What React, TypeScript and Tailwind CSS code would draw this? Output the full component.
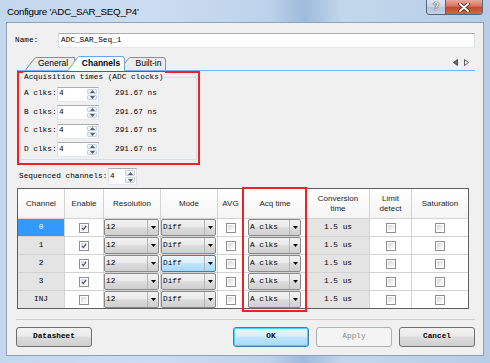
import React from 'react';

const mono = "font-['Liberation_Mono',monospace] text-[7.75px] text-black";
const btnBg = 'bg-[linear-gradient(#f2f2f2,#ebebeb_45%,#dddddd_50%,#cfcfcf)]';

const UpTri = () => (
  <svg width="5" height="3" viewBox="0 0 5 3"><path d="M0 3 L2.5 0 L5 3 Z" fill="#4c607f" /></svg>
);
const DownTri = ({ color = '#4c607f' }: { color?: string }) => (
  <svg width="5" height="3" viewBox="0 0 5 3"><path d="M0 0 L5 0 L2.5 3 Z" fill={color} /></svg>
);

const SpinBox = ({ value, className }: { value: string; className: string }) => (
  <div className={`flex bg-white border border-[#abadb3] border-x-[#dbdfe6] border-b-[#e3e9ef] ${className}`}>
    <span className={`flex-1 pl-px flex items-center leading-none ${mono}`}>{value}</span>
    <div className="w-[12px] flex flex-col gap-px p-px">
      <div className="flex-1 rounded-[1px] border border-[#c9d0da] bg-[linear-gradient(#f7f9fb,#e4e9ef)] flex items-center justify-center">
        <UpTri />
      </div>
      <div className="flex-1 rounded-[1px] border border-[#c9d0da] bg-[linear-gradient(#f7f9fb,#e4e9ef)] flex items-center justify-center">
        <DownTri />
      </div>
    </div>
  </div>
);

const CheckBox = ({ checked }: { checked?: boolean }) => (
  <div className="w-[10px] h-[10px] border border-[#8e8f8f] bg-white p-px">
    <div className="w-full h-full bg-[linear-gradient(135deg,#d6d6d6,#f4f4f4_70%,#fdfdfd)] flex items-center justify-center">
      {checked && (
        <svg width="8" height="8" viewBox="0 0 8 8">
          <path d="M1.3 4 L3.2 6.2 L6.8 1.2" fill="none" stroke="#2f4e9c" strokeWidth="1.5" />
        </svg>
      )}
    </div>
  </div>
);

const Combo = ({ text, hover }: { text: string; hover?: boolean }) => (
  <div
    className={`w-full h-full flex rounded-[2px] border ${
      hover
        ? 'border-[#3c7fb1] bg-[linear-gradient(#eaf6fd,#d9f0fc_45%,#bee6fd_50%,#a7d9f5)]'
        : `border-[#8a8a8a] ${btnBg}`
    }`}
  >
    <span className={`flex-1 pl-px flex items-center leading-none ${mono}`}>{text}</span>
    <div className="w-[11px] border-l border-[#b5b5b5] flex items-center justify-center">
      <DownTri color="#000" />
    </div>
  </div>
);

const Button = ({ label, variant }: { label: string; variant?: 'default' | 'disabled' }) => (
  <div
    className={`w-[76px] h-[20px] rounded-[3px] border flex items-center justify-center font-['Liberation_Mono',monospace] text-[7.75px] font-bold ${
      variant === 'default'
        ? 'border-[#3c7fb1] bg-[linear-gradient(#eaf6fd,#d9f0fc_45%,#bee6fd_50%,#a7d9f5)] text-black shadow-[inset_0_0_0_1px_#48d5fe]'
        : variant === 'disabled'
        ? 'border-[#adb2b5] bg-[#f4f4f4] text-[#8a8a8a] font-normal'
        : `border-[#707070] ${btnBg} text-black`
    }`}
  >
    {label}
  </div>
);

const TriLeft = () => (
  <svg width="5" height="7" viewBox="0 0 5 7"><path d="M4.5 0.5 L0.5 3.5 L4.5 6.5 Z" fill="#6b6b6b" stroke="#333" strokeWidth="0.8" /></svg>
);
const TriRight = () => (
  <svg width="5" height="7" viewBox="0 0 5 7"><path d="M0.5 0.5 L4.5 3.5 L0.5 6.5 Z" fill="#fff" stroke="#333" strokeWidth="0.8" /></svg>
);

const rows = [
  { ch: '0', en: true, sel: true },
  { ch: '1', en: true },
  { ch: '2', en: true, hover: true },
  { ch: '3', en: true },
  { ch: 'INJ', en: false },
];

const headers = ['Channel', 'Enable', 'Resolution', 'Mode', 'AVG', 'Acq time', 'Conversion\ntime', 'Limit\ndetect', 'Saturation'];

export default function App() {
  return (
    <div className="w-[490px] h-[363px] flex flex-col overflow-hidden bg-[linear-gradient(90deg,#c3d7ed_0%,#cbddf0_30%,#bdd2ea_55%,#9fbadb_62%,#c3d7ec_70%,#b7cde6_100%)] font-['Liberation_Sans',Arial,sans-serif]">
      {/* title bar */}
      <div className="h-[22px] flex justify-between items-start pl-[7px] pr-[7px] shrink-0">
        <span className="mt-[6px] text-[9.75px] leading-[12px] tracking-[-0.25px] text-black">Configure 'ADC_SAR_SEQ_P4'</span>
        <div className="flex h-[15px] rounded-b-[4px] border border-t-0 border-[#55667d] overflow-hidden">
          <div className="w-[19px] border-r border-[#55667d] bg-[linear-gradient(#dde7f2,#c5d5e6_50%,#b2c5db_51%,#c3d4e6)] flex items-center justify-center">
            <span className="text-[10px] font-bold leading-none text-white [text-shadow:0_0_1px_#1d2a3a,0_0_1px_#1d2a3a]">?</span>
          </div>
          <div className="w-[36px] bg-[linear-gradient(#e9a99b,#d7705e_45%,#c7452f_50%,#d2664a)] flex items-center justify-center">
            <svg width="12" height="9" viewBox="0 0 12 9">
              <path d="M2 1 L10 8 M10 1 L2 8" stroke="#5a1d14" strokeWidth="3.6" strokeLinecap="round" />
              <path d="M2 1 L10 8 M10 1 L2 8" stroke="#fff" strokeWidth="2" strokeLinecap="round" />
            </svg>
          </div>
        </div>
      </div>

      {/* client area */}
      <div className="flex-1 ml-[6px] mr-[6px] mb-[7px] border border-[#8fa2b9] bg-[#f0f0f0] flex flex-col">
        {/* name */}
        <div className="mt-[10px] flex items-center pl-[8px] pr-[8px] h-[15px]">
          <span className={`w-[43px] ${mono}`}>Name:</span>
          <div className={`flex-1 h-[15px] bg-white border border-[#abadb3] border-x-[#dbdfe6] border-b-[#e3e9ef] flex items-center pl-[2px] ${mono}`}>
            ADC_SAR_Seq_1
          </div>
        </div>

        {/* tabs */}
        <div className="mt-[8px] h-[14px] ml-[18px] mr-[8px] flex items-end justify-between">
          <div className="flex items-end h-full">
            <div className="relative w-[50px] h-[13px] flex items-center justify-center pl-[6px]">
              <svg className="absolute inset-0" width="50" height="13" viewBox="0 0 50 13">
                <path d="M0.5 13 L9.5 1.5 Q10.5 0.5 12 0.5 L49.5 0.5 L49.5 13" fill="#ececec" stroke="#8c8e94" />
              </svg>
              <span className="relative text-[8.5px] leading-none text-black">General</span>
            </div>
            <div className="relative z-10 -ml-[8px] w-[58px] h-[14px] flex items-center justify-center pl-[10px]">
              <svg className="absolute inset-0" width="58" height="15" viewBox="0 0 58 15">
                <path d="M0.5 15 L10.5 1.5 Q11.5 0.5 13 0.5 L55 0.5 Q57.5 0.5 57.5 3 L57.5 15" fill="#fbfdff" stroke="#6aa5dc" />
              </svg>
              <span className="relative text-[8.5px] font-bold leading-none text-black">Channels</span>
            </div>
            <div className="relative -ml-[6px] w-[47px] h-[13px] flex items-center justify-center pl-[12px]">
              <svg className="absolute inset-0" width="47" height="13" viewBox="0 0 47 13">
                <path d="M0.5 13 L9.5 1.5 Q10.5 0.5 12 0.5 L44 0.5 Q46.5 0.5 46.5 3 L46.5 13" fill="#ececec" stroke="#8c8e94" />
              </svg>
              <span className="relative text-[8.5px] leading-none text-black">Built-in</span>
            </div>
          </div>
          <div className="flex items-center gap-[6px] mb-[4px] mr-[6px]">
            <TriLeft />
            <TriRight />
          </div>
        </div>
        <div className="h-px ml-[10px] mr-[8px] bg-[#7fb2e6]" />

        {/* acquisition times (highlighted) */}
        <div className="ml-[10px] w-[183px] h-[94px] border-2 border-[#ec2227] flex flex-col">
          <div className="relative mt-[4px] mx-px mb-[3px] flex-1 border border-[#d5dfe5] rounded-[2px] pt-[7px] pl-[3px]">
            <span className={`absolute -top-[6px] left-[2px] px-px bg-[#f0f0f0] leading-[10px] ${mono}`}>
              Acquisition times (ADC clocks)
            </span>
            {['A', 'B', 'C', 'D'].map((l) => (
              <div key={l} className="h-[18.5px] flex items-center">
                <span className={`w-[33px] ${mono}`}>{l} clks:</span>
                <SpinBox value="4" className="w-[42px] h-[15px]" />
                <span className={`ml-[16px] ${mono}`}>291.67 ns</span>
              </div>
            ))}
          </div>
        </div>

        {/* sequenced channels */}
        <div className="mt-[3px] ml-[12px] h-[17px] flex items-center">
          <span className={`w-[89px] ${mono}`}>Sequenced channels:</span>
          <SpinBox value="4" className="w-[29px] h-[17px]" />
        </div>

        {/* table */}
        <div className="relative mt-[3px] ml-[10px] w-[452px]">
          <div className="grid grid-cols-[46px_38px_56px_56px_25px_62px_62px_41px_56px] grid-rows-[29px_repeat(5,17px)] gap-px bg-[#d3d3d3] border border-[#5f5f5f]">
            {headers.map((h) => (
              <div
                key={h}
                className="bg-[linear-gradient(#ffffff,#f4f4f4)] flex items-center justify-center text-center whitespace-pre-line text-[8px] leading-[10px] text-[#1e1e1e]"
              >
                {h}
              </div>
            ))}
            {rows.map((r) => (
              <React.Fragment key={r.ch}>
                <div
                  className={`flex items-center justify-center ${mono} ${
                    r.sel ? 'bg-[#3399ff] !text-white' : 'bg-[#e4e4e4]'
                  }`}
                >
                  {r.ch}
                </div>
                <div className="bg-white flex items-center justify-center">
                  <CheckBox checked={r.en} />
                </div>
                <div className="bg-white pr-px">
                  <Combo text="12" />
                </div>
                <div className="bg-white pr-px">
                  <Combo text="Diff" hover={r.hover} />
                </div>
                <div className="bg-white flex items-center justify-center">
                  <CheckBox />
                </div>
                <div className="bg-white pl-[4px] pr-[5px]">
                  <Combo text="A clks" />
                </div>
                <div className={`bg-[#e4e4e4] flex items-center justify-center ${mono}`}>1.5 us</div>
                <div className="bg-white flex items-center justify-center">
                  <CheckBox />
                </div>
                <div className="bg-white flex items-center justify-center">
                  <CheckBox />
                </div>
              </React.Fragment>
            ))}
          </div>
          {/* highlight around acq time column */}
          <div className="absolute left-[225px] -top-px w-[65px] h-[125px] border-2 border-[#ec2227] pointer-events-none" />
        </div>

        {/* separator */}
        <div className="mt-[10px] ml-[9px] mr-[8px] h-px bg-[#d0d0d0]" />

        {/* buttons */}
        <div className="mt-[7px] ml-[9px] mr-[8px] flex gap-[7px]">
          <Button label="Datasheet" />
          <div className="flex-1" />
          <Button label="OK" variant="default" />
          <Button label="Apply" variant="disabled" />
          <Button label="Cancel" />
        </div>
      </div>
    </div>
  );
}
